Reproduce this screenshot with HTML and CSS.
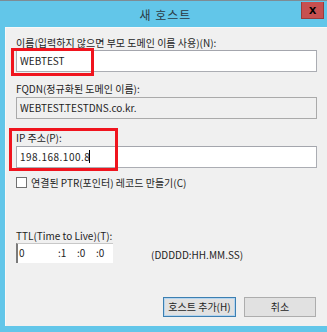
FILE: index.html
```html
<!DOCTYPE HTML>
<html>
<head>
<meta charset="utf-8">
<title>새 호스트</title>
<link rel="stylesheet" href="styles.css">
</head>
<body>
<div class="window">
  <div class="titlebar">
    <span class="title">새 호스트</span>
    <span class="close">x</span>
  </div>
  <div class="client">
    <label class="lbl l-name">이름(입력하지 않으면 부모 도메인 이름 사용)(N):</label>
    <div class="field f-name">WEBTEST</div>
    <label class="lbl l-fqdn">FQDN(정규화된 도메인 이름):</label>
    <div class="field readonly">WEBTEST.TESTDNS.co.kr.</div>
    <label class="lbl l-ip">IP 주소(P):</label>
    <div class="field f-ip">198.168.100.8<span class="caret"></span></div>
    <div class="check-row">
      <span class="check"></span>
      <span>연결된 PTR(포인터) 레코드 만들기(C)</span>
    </div>
    <label class="lbl l-ttl">TTL(Time to Live)(T):</label>
    <div class="ttl-row">
      <div class="ttl">
        <span class="t-d">0</span>
        <span class="t-h">:1</span>
        <span class="t-m">:0</span>
        <span class="t-s">:0</span>
      </div>
      <span class="ttl-fmt">(DDDDD:HH.MM.SS)</span>
    </div>
    <div class="buttons">
      <span class="btn default">호스트 추가(H)</span>
      <span class="btn">취소</span>
    </div>
    <span class="mark mark-name"></span>
    <span class="mark mark-ip"></span>
  </div>
</div>
</body>
</html>
```

FILE: styles.css
```css
body {
	margin:0;
	padding:0;
	font:10px/13px "Noto Sans CJK KR", "Liberation Sans", sans-serif;
	color:#1e1e1e;
}
.window {
	width:327px;
	height:332px;
	box-sizing:border-box;
	background:#62c6e9;
	border-top:1px solid #7d8c95;
	display:flex;
	flex-direction:column;
}
.titlebar {
	height:26px;
	display:flex;
	align-items:center;
	justify-content:center;
	position:relative;
}
.title {
	font-size:12px;
	color:#2b3a44;
	letter-spacing:1px;
	margin-left:4px;
}
.close {
	position:absolute;
	right:3px;
	top:1px;
	width:23px;
	height:17px;
	background:#c75050;
	border:1px solid #9a3c3c;
	border-top:0;
	box-sizing:border-box;
	color:#000;
	font:700 13px/15px "Liberation Sans", sans-serif;
	text-align:center;
}
.client {
	flex:1;
	margin:0 0 6px 5px;
	background:#f0f0f0;
	border-top:1px solid #f8f8f8;
	border-left:1px solid #f8f8f8;
	padding:0 10px 0 10px;
	display:flex;
	flex-direction:column;
	position:relative;
}
.lbl {
	display:block;
	height:13px;
}
.l-name {
	margin-top:8px;
}
.l-fqdn {
	margin-top:10px;
}
.l-ip {
	margin-top:12px;
}
.l-ttl {
	margin-top:40px;
}
.field {
	height:22px;
	box-sizing:border-box;
	background:#fff;
	border:1px solid #abadb3;
	border-top-color:#a4a6ad;
	padding:0 3px;
	line-height:20px;
	margin-top:1px;
}
.readonly {
	background:#f0f0f0;
	border-color:#aaa;
	margin-top:2px;
}
.f-ip {
	margin-top:2px;
	letter-spacing:0.5px;
}
.caret {
	display:inline-block;
	width:1px;
	height:13px;
	background:#000;
	vertical-align:-2px;
	margin-left:-1px;
}
.check-row {
	margin-top:8px;
	display:flex;
	align-items:center;
	gap:4px;
	height:13px;
}
.check {
	width:11px;
	height:11px;
	box-sizing:border-box;
	background:#fff;
	border:1px solid #707070;
}
.ttl-row {
	margin-top:1px;
	display:flex;
	align-items:center;
	gap:38px;
}
.ttl {
	width:97px;
	height:20px;
	box-sizing:border-box;
	background:#fff;
	border-top:1px solid #c8c8c8;
	border-left:2px solid #7a7a7a;
	position:relative;
	line-height:18px;
}
.ttl span {
	position:absolute;
	top:0;
}
.t-d { left:1px; }
.t-h { left:40px; }
.t-m { left:59px; }
.t-s { left:78px; }
.ttl-fmt {
	margin-top:3px;
}
.buttons {
	margin-top:34px;
	display:flex;
	justify-content:flex-end;
	gap:8px;
	padding-right:1px;
}
.btn {
	width:72px;
	height:20px;
	box-sizing:border-box;
	background:#e1e1e1;
	border:1px solid #adadad;
	text-align:center;
	line-height:18px;
}
.btn.default {
	width:73px;
	border-color:#3c7fb1;
	box-shadow:inset 0 0 0 1px #b5d5ef;
}
.mark {
	position:absolute;
	border:3px solid #f0141e;
	box-sizing:border-box;
}
.mark-name {
	left:5px;
	top:20px;
	width:83px;
	height:28px;
}
.mark-ip {
	left:3px;
	top:100px;
	width:109px;
	height:43px;
}
```
